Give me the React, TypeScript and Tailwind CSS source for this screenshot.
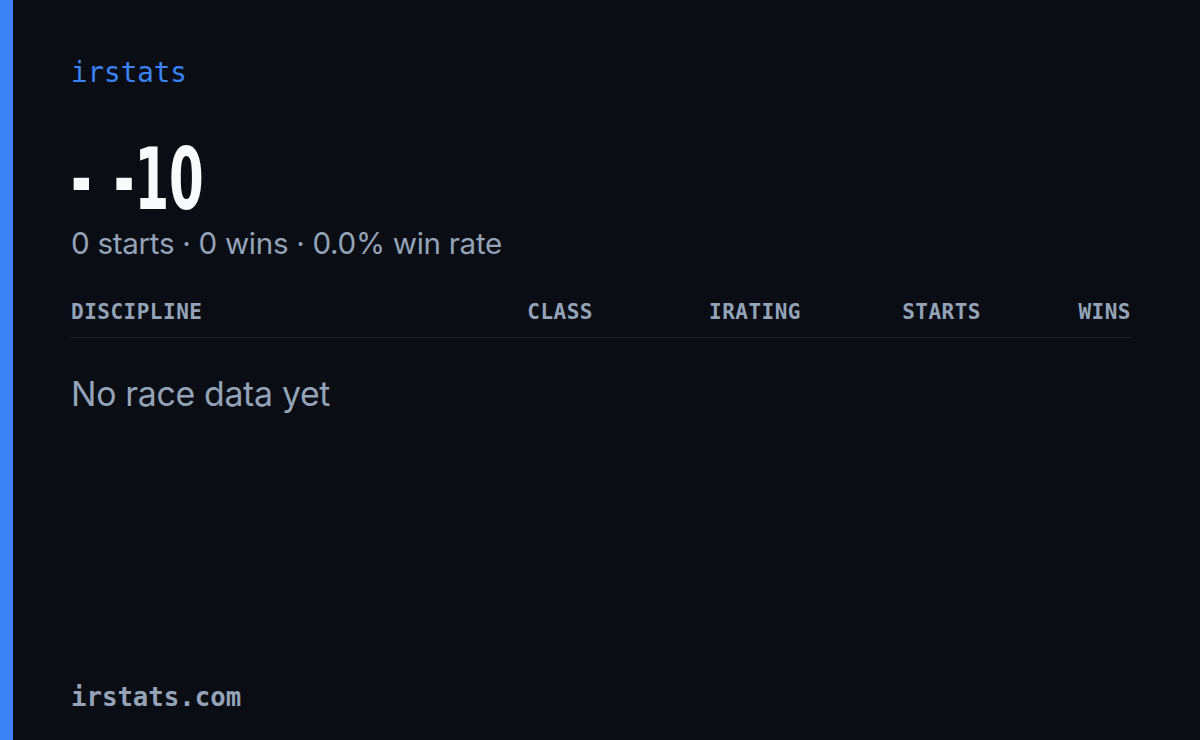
import React from 'react';

const columns = [
    { label: "DISCIPLINE", align: "text-left" },
    { label: "CLASS", align: "text-right" },
    { label: "IRATING", align: "text-right" },
    { label: "STARTS", align: "text-right" },
    { label: "WINS", align: "text-right" },
];

const mono = "font-['DejaVu_Sans_Mono','Liberation_Mono',monospace]";
const sans = "font-['Inter','Open_Sans',sans-serif]";

export default function App() {
    return (
        <div className="flex w-[1200px] h-[740px] bg-[#0a0d14] overflow-hidden">
            <div className="w-[13px] shrink-0 bg-[#3b82f6]" />
            <div className="flex flex-col flex-1 pl-[58px] pr-[69px] pt-[55px] pb-[26px]">
                <div className={cn(mono, "text-[27.5px] leading-[34px] text-[#3b82f6]")}>irstats</div>

                {/* condensed headline */}
                <div className="mt-[46px] h-[88px] font-['DejaVu_Sans',sans-serif] font-bold text-[86px] leading-[88px] text-[#f8fafc] whitespace-nowrap">
                    <span className="inline-block origin-left scale-x-[0.58] [word-spacing:8px]">- -10</span>
                </div>
                <div className={cn(sans, "mt-[2px] text-[29.6px] leading-[36px] text-[#94a3b8] tracking-[-0.3px]")}>
                    0 starts · 0 wins · 0.0% win rate
                </div>

                <div className={cn(mono, "mt-[38px] grid grid-cols-[1fr_160px_208px_180px_150px] pb-[12px] border-b border-[#1a1f2b] text-[21px] leading-[26px] font-bold text-[#94a3b8] tracking-[0.5px]")}>
                    {columns.map(c => (
                        <div key={c.label} className={c.align}>{c.label}</div>
                    ))}
                </div>

                <div className={cn(sans, "mt-[36px] text-[33.8px] leading-[40px] text-[#94a3b8] tracking-[-0.3px]")}>
                    No race data yet
                </div>

                <div className={cn(mono, "mt-auto text-[25.7px] leading-[34px] font-bold text-[#94a3b8]")}>irstats.com</div>
            </div>
        </div>
    );
}

function cn(...parts: string[]) {
    return parts.join(" ");
}
